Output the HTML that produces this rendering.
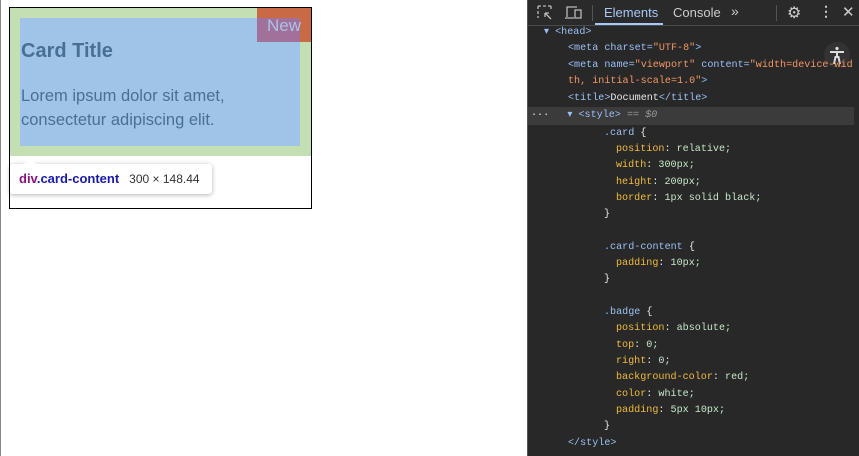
<!DOCTYPE html>
<html><head><meta charset="UTF-8"><style>
*{margin:0;padding:0;box-sizing:border-box}
body{width:859px;height:456px;overflow:hidden;background:#fff;position:relative;font-family:"Liberation Sans",sans-serif}
.lline{position:absolute;left:0;top:0;width:1px;height:456px;background:#888}
.card{position:absolute;left:9px;top:7px;width:303px;height:202px;border:1px solid #000}
.pad{position:absolute;left:0;top:0;width:301px;height:148px;background:#c5dfb5}
.cont{position:absolute;left:10px;top:10px;width:280px;height:128px;background:#9fc4e7}
.badge{position:absolute;right:0;top:0;width:54px;height:34px;background:#c86a45}
.badgeo{position:absolute;left:247px;top:10px;width:43px;height:24px;background:#a1709b}
.bt{position:absolute;left:257px;top:8px;color:#a9c4e8;font-size:17px}
.t{position:absolute;left:11px;top:32px;font-size:20px;font-weight:bold;color:#4a6f95}
.p{position:absolute;left:11px;top:76px;font-size:16.5px;line-height:24px;color:#4a6f95}
.tip{position:absolute;left:10px;top:164px;width:202px;height:30px;background:#fff;border-radius:3px;box-shadow:0 1px 5px rgba(0,0,0,.3);font-size:13px;line-height:30px;padding-left:9px}
.tip:before{content:"";position:absolute;left:14px;top:-6px;border:6px solid transparent;border-top:0;border-bottom-color:#fff}
.dt{position:absolute;left:527px;top:0;width:332px;height:456px;background:#282828;border-left:1px solid #555;font-family:"Liberation Mono","NanumGothic",monospace;font-size:10.1px;color:#9cc0f5}
.tb{position:absolute;left:0;top:0;width:332px;height:26px;border-bottom:1px solid #4a4a4a;background:#2a2a2a;font-family:"Liberation Sans",sans-serif;font-size:13px;color:#ccc}
.c{position:absolute;left:0;top:2px;width:332px}
.l{position:absolute;white-space:pre;height:16px;line-height:16px}
.o{color:#f29766}.y{color:#f2bb3c}.g{color:#c8e6c9}.w{color:#e8e8e8}.a{color:#9cc0f5}
.sel{position:absolute;left:0;top:107px;width:326px;height:18px;background:#3b3b3b}
</style></head><body>
<div class="lline"></div>
<div class="card">
<div class="pad"></div><div class="cont"></div>
<div class="badge"></div><div class="badgeo"></div><div class="bt">New</div>
<div class="t">Card Title</div>
<div class="p">Lorem ipsum dolor sit amet,<br>consectetur adipiscing elit.</div>
</div>
<div class="tip"><span style="color:#881280;font-weight:bold">div</span><span style="color:#1a1aa6;font-weight:bold">.card-content</span><span style="color:#333;margin-left:10px;font-size:12px">300 × 148.44</span></div>
<div class="dt">
<div class="tb">
<svg style="position:absolute;left:9px;top:5px" width="16" height="16" fill="none" stroke="#bbb" stroke-width="1.3"><path d="M1 1h3M6 1h3M11 1h3M1 1v3M1 6v3M1 11v2M14 1v3M8 8l6 6M8 8h4M8 8v4"/></svg>
<svg style="position:absolute;left:37px;top:5px" width="18" height="16" fill="none" stroke="#bbb" stroke-width="1.3"><path d="M2 12V2h10M0 13h9M10 5h6v8h-6z"/></svg>
<div style="position:absolute;left:64px;top:5px;width:1px;height:16px;background:#555"></div>
<div style="position:absolute;left:76px;top:5px;color:#a8c7fa">Elements</div>
<div style="position:absolute;left:67px;top:23px;width:68px;height:2px;background:#a8c7fa"></div>
<div style="position:absolute;left:145px;top:5px">Console</div>
<div style="position:absolute;left:203px;top:3px;font-size:14px">»</div>
<div style="position:absolute;left:248px;top:5px;width:1px;height:16px;background:#555"></div>
<div style="position:absolute;left:259px;top:3px;font-size:16px">⚙</div>
<div style="position:absolute;left:291px;top:3px;font-size:14px;font-weight:bold">⋮</div>
<div style="position:absolute;left:314px;top:3px;font-size:15px">✕</div>
</div>
<div class="sel"></div>
<div style="position:absolute;left:296px;top:42px;width:26px;height:26px;border-radius:13px;background:#333"><svg width="26" height="26" fill="none" stroke="#ddd" stroke-width="2"><circle cx="13" cy="6.5" r="1.6" fill="#ddd" stroke="none"/><path d="M6 10h14M13 10v6M10 22l1.5-7h3L16 22"/></svg></div>
<div class="c">
<div class="l" style="left:16px;top:23px">▾ &lt;head&gt;</div>
<div class="l" style="left:40px;top:39px">&lt;meta charset=<span class="o">"UTF-8"</span>&gt;</div>
<div class="l" style="left:40px;top:56px">&lt;meta name=<span class="o">"viewport"</span> content=<span class="o">"width=device-wid</span></div>
<div class="l o" style="left:40px;top:72px">th, initial-scale=1.0"<span class="a">&gt;</span></div>
<div class="l" style="left:40px;top:89px">&lt;title&gt;<span class="w">Document</span>&lt;/title&gt;</div>
<div class="l" style="left:3px;top:106px"><span class="w">···</span>   ▾ &lt;style&gt; <span style="color:#999;font-style:italic">== $0</span></div>
<div class="l a" style="left:76px;top:124px">.card <span class="w">{</span></div>
<div class="l" style="left:88px;top:140px"><span class="y">position</span><span class="w">: </span><span class="g">relative;</span></div>
<div class="l" style="left:88px;top:156px"><span class="y">width</span><span class="w">: </span><span class="g">300px;</span></div>
<div class="l" style="left:88px;top:173px"><span class="y">height</span><span class="w">: </span><span class="g">200px;</span></div>
<div class="l" style="left:88px;top:189px"><span class="y">border</span><span class="w">: </span><span class="g">1px solid black;</span></div>
<div class="l w" style="left:76px;top:205px">}</div>
<div class="l a" style="left:76px;top:238px">.card-content <span class="w">{</span></div>
<div class="l" style="left:88px;top:254px"><span class="y">padding</span><span class="w">: </span><span class="g">10px;</span></div>
<div class="l w" style="left:76px;top:270px">}</div>
<div class="l a" style="left:76px;top:303px">.badge <span class="w">{</span></div>
<div class="l" style="left:88px;top:319px"><span class="y">position</span><span class="w">: </span><span class="g">absolute;</span></div>
<div class="l" style="left:88px;top:336px"><span class="y">top</span><span class="w">: </span><span class="g">0;</span></div>
<div class="l" style="left:88px;top:352px"><span class="y">right</span><span class="w">: </span><span class="g">0;</span></div>
<div class="l" style="left:88px;top:368px"><span class="y">background-color</span><span class="w">: </span><span class="g">red;</span></div>
<div class="l" style="left:88px;top:385px"><span class="y">color</span><span class="w">: </span><span class="g">white;</span></div>
<div class="l" style="left:88px;top:401px"><span class="y">padding</span><span class="w">: </span><span class="g">5px 10px;</span></div>
<div class="l w" style="left:76px;top:417px">}</div>
<div class="l" style="left:40px;top:434px">&lt;/style&gt;</div>
</div>
</div>
</body></html>
